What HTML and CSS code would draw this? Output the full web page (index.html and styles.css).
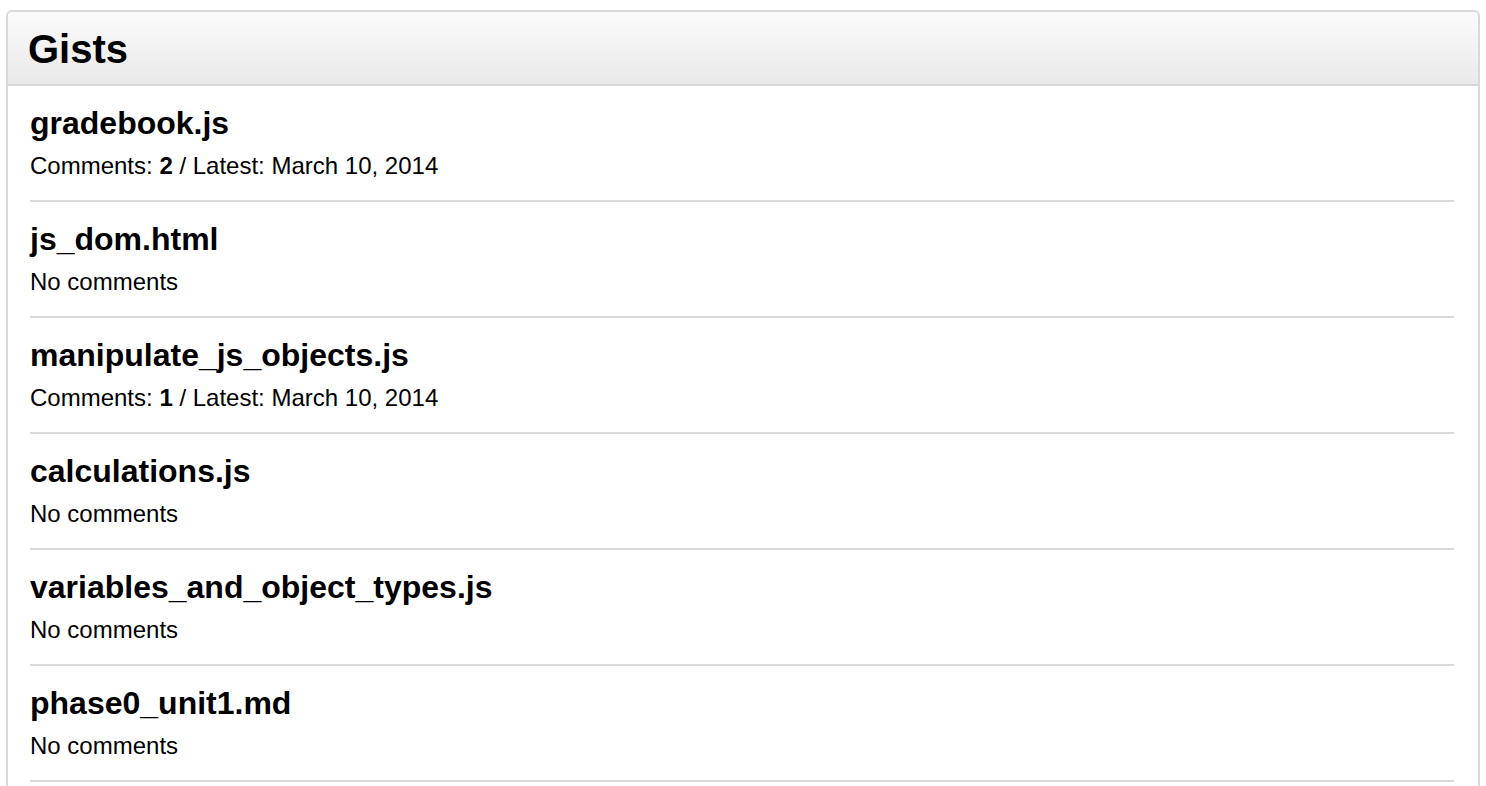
FILE: index.html
```html
<!DOCTYPE html>
<html>
<head>
<meta charset="utf-8">
<link rel="stylesheet" href="styles.css">
</head>
<body>
<div class="box">
  <div class="box-header"><h1 class="box-title">Gists</h1></div>
  <ul class="gist-list">
    <li class="gist">
      <h3 class="gist-name">gradebook.js</h3>
      <p class="gist-meta">Comments: <b>2</b> / Latest: March 10, 2014</p>
    </li>
    <li class="gist">
      <h3 class="gist-name">js_dom.html</h3>
      <p class="gist-meta">No comments</p>
    </li>
    <li class="gist">
      <h3 class="gist-name">manipulate_js_objects.js</h3>
      <p class="gist-meta">Comments: <b>1</b> / Latest: March 10, 2014</p>
    </li>
    <li class="gist">
      <h3 class="gist-name">calculations.js</h3>
      <p class="gist-meta">No comments</p>
    </li>
    <li class="gist">
      <h3 class="gist-name">variables_and_object_types.js</h3>
      <p class="gist-meta">No comments</p>
    </li>
    <li class="gist">
      <h3 class="gist-name">phase0_unit1.md</h3>
      <p class="gist-meta">No comments</p>
    </li>
  </ul>
</div>
</body>
</html>
```
FILE: styles.css
```css
html, body {
  margin: 0;
  padding: 0;
  background: #fff;
}
body {
  font-family: "Liberation Sans", Arial, Helvetica, sans-serif;
  color: #000;
}
.box {
  margin: 10px 6px 0 6px;
  border: 2px solid #d9d9d9;
  border-radius: 6px 6px 0 0;
  padding-bottom: 30px;
}
.box-header {
  background: linear-gradient(#fbfbfb, #e9e9e9);
  border-bottom: 2px solid #d6d6d6;
  border-radius: 4px 4px 0 0;
  padding: 13px 20px 11px;
}
.box-title {
  margin: 0;
  font-size: 40px;
  line-height: 48px;
  font-weight: bold;
}
.gist-list {
  list-style: none;
  margin: 0;
  padding: 0 24px 0 22px;
}
.gist {
  padding: 19px 0 20px;
  border-bottom: 2px solid #d9d9d9;
}
.gist-name {
  margin: 0;
  font-size: 32px;
  line-height: 36px;
  font-weight: bold;
}
.gist-meta {
  margin: 11px 0 0;
  font-size: 24px;
  line-height: 28px;
}
.gist-meta b {
  font-weight: bold;
}
```
